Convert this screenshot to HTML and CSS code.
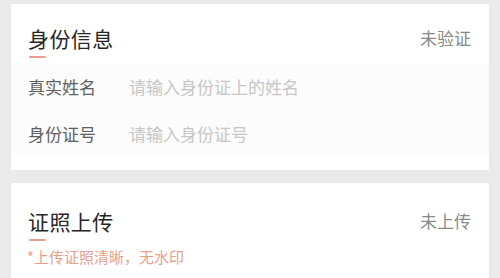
FILE: index.html
```html
<!DOCTYPE html>
<html lang="zh">
<head>
<meta charset="utf-8">
<link rel="stylesheet" href="styles.css">
</head>
<body>
<div class="page">
  <section class="card card-id">
    <div class="card-head">
      <div class="title-wrap">
        <h2 class="title">身份信息</h2>
        <span class="title-bar"></span>
      </div>
      <span class="status">未验证</span>
    </div>
    <div class="rows">
      <div class="row">
        <span class="label">真实姓名</span>
        <span class="placeholder">请输入身份证上的姓名</span>
      </div>
      <div class="row">
        <span class="label">身份证号</span>
        <span class="placeholder">请输入身份证号</span>
      </div>
    </div>
  </section>
  <section class="card card-upload">
    <div class="card-head">
      <div class="title-wrap">
        <h2 class="title">证照上传</h2>
        <span class="title-bar"></span>
      </div>
      <span class="status">未上传</span>
    </div>
    <p class="hint">*上传证照清晰，无水印</p>
  </section>
</div>
</body>
</html>
```
FILE: styles.css
```css
html, body {
  margin: 0;
  padding: 0;
  background: #ebebeb;
  font-family: "Noto Sans CJK SC", "Noto Sans", sans-serif;
  overflow: hidden;
}
.page {
  display: flex;
  flex-direction: column;
  gap: 13px;
  padding: 4px 11px 0 11px;
  height: 278px;
  box-sizing: border-box;
}
.card {
  background: #fff;
  box-shadow: 0 0 3px rgba(0, 0, 0, 0.04);
  padding: 0 18px 0 17px;
}
.card-id {
  height: 166px;
  box-sizing: border-box;
}
.card-upload {
  flex: 1;
}
.card-head {
  display: flex;
  justify-content: space-between;
  align-items: flex-start;
  padding-top: 23px;
}
.title-wrap {
  display: flex;
  flex-direction: column;
}
.title {
  margin: 0;
  font-size: 21px;
  line-height: 22px;
  font-weight: 400;
  color: #262626;
  letter-spacing: 0.4px;
}
.title-bar {
  display: block;
  width: 17px;
  height: 2px;
  margin: 7px 0 0 1px;
  background: #e9a08c;
  border-radius: 1px;
}
.status {
  font-size: 17px;
  line-height: 22px;
  color: #8a8a8a;
  margin-top: 0;
}
.card-upload .card-head {
  padding-top: 27px;
}
.rows {
  margin: 5px -18px 0 -17px;
  padding: 0 18px 0 17px;
  background: #fcfcfc;
}
.row {
  display: flex;
  align-items: center;
  height: 46px;
}
.row + .row {
  margin-top: 1px;
}
.label {
  width: 101px;
  font-size: 17px;
  color: #606060;
}
.placeholder {
  font-size: 17px;
  color: #c6c6c6;
}
.hint {
  margin: 6px 0 0 -1px;
  font-size: 15px;
  line-height: 20px;
  color: #e8a08b;
}
```
